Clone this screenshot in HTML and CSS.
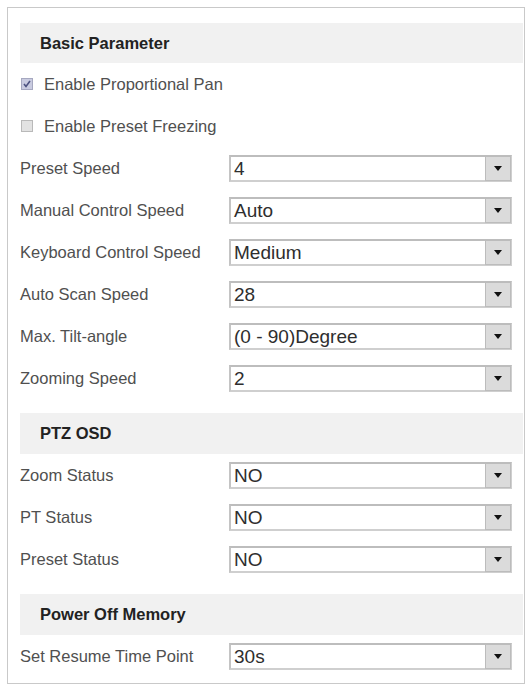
FILE: index.html
```html
<!DOCTYPE html>
<html lang="en">
<head>
    <meta charset="UTF-8">
    <meta name="viewport" content="width=device-width, initial-scale=1.0">
    <title>PTZ Basic Parameter</title>
    <link rel="stylesheet" href="styles.css">
</head>
<body>
    <div class="panel">
        <!-- Basic Parameter -->
        <div class="section-title">Basic Parameter</div>
        <div class="check-row">
            <span class="checkbox checked">
                <svg width="10" height="10" viewBox="0 0 10 10"><path d="M2 5l2 2.5L8 2" fill="none" stroke="#4d5280" stroke-width="1.6"/></svg>
            </span>
            Enable Proportional Pan
        </div>
        <div class="check-row">
            <span class="checkbox"></span>
            Enable Preset Freezing
        </div>
        <div class="field-row">
            <span class="field-label">Preset Speed</span>
            <div class="select"><span class="select-value">4</span><span class="select-btn"><svg width="8" height="5" viewBox="0 0 8 5"><path d="M0 0h8L4 5z" fill="#111"/></svg></span></div>
        </div>
        <div class="field-row">
            <span class="field-label">Manual Control Speed</span>
            <div class="select"><span class="select-value">Auto</span><span class="select-btn"><svg width="8" height="5" viewBox="0 0 8 5"><path d="M0 0h8L4 5z" fill="#111"/></svg></span></div>
        </div>
        <div class="field-row">
            <span class="field-label">Keyboard Control Speed</span>
            <div class="select"><span class="select-value">Medium</span><span class="select-btn"><svg width="8" height="5" viewBox="0 0 8 5"><path d="M0 0h8L4 5z" fill="#111"/></svg></span></div>
        </div>
        <div class="field-row">
            <span class="field-label">Auto Scan Speed</span>
            <div class="select"><span class="select-value">28</span><span class="select-btn"><svg width="8" height="5" viewBox="0 0 8 5"><path d="M0 0h8L4 5z" fill="#111"/></svg></span></div>
        </div>
        <div class="field-row">
            <span class="field-label">Max. Tilt-angle</span>
            <div class="select"><span class="select-value">(0 - 90)Degree</span><span class="select-btn"><svg width="8" height="5" viewBox="0 0 8 5"><path d="M0 0h8L4 5z" fill="#111"/></svg></span></div>
        </div>
        <div class="field-row">
            <span class="field-label">Zooming Speed</span>
            <div class="select"><span class="select-value">2</span><span class="select-btn"><svg width="8" height="5" viewBox="0 0 8 5"><path d="M0 0h8L4 5z" fill="#111"/></svg></span></div>
        </div>

        <!-- PTZ OSD -->
        <div class="section-title spaced">PTZ OSD</div>
        <div class="field-row">
            <span class="field-label">Zoom Status</span>
            <div class="select"><span class="select-value">NO</span><span class="select-btn"><svg width="8" height="5" viewBox="0 0 8 5"><path d="M0 0h8L4 5z" fill="#111"/></svg></span></div>
        </div>
        <div class="field-row">
            <span class="field-label">PT Status</span>
            <div class="select"><span class="select-value">NO</span><span class="select-btn"><svg width="8" height="5" viewBox="0 0 8 5"><path d="M0 0h8L4 5z" fill="#111"/></svg></span></div>
        </div>
        <div class="field-row">
            <span class="field-label">Preset Status</span>
            <div class="select"><span class="select-value">NO</span><span class="select-btn"><svg width="8" height="5" viewBox="0 0 8 5"><path d="M0 0h8L4 5z" fill="#111"/></svg></span></div>
        </div>

        <!-- Power Off Memory -->
        <div class="section-title spaced">Power Off Memory</div>
        <div class="field-row">
            <span class="field-label">Set Resume Time Point</span>
            <div class="select"><span class="select-value">30s</span><span class="select-btn"><svg width="8" height="5" viewBox="0 0 8 5"><path d="M0 0h8L4 5z" fill="#111"/></svg></span></div>
        </div>
    </div>
</body>
</html>
```

FILE: styles.css
```css
* {
    margin: 0;
    padding: 0;
    box-sizing: border-box;
}

body {
    font-family: "Liberation Sans", Arial, sans-serif;
    background-color: #fff;
    color: #505050;
}

/* Outer panel */
.panel {
    margin: 7px 0 0 7px;
    width: 518px;
    height: 677px;
    border: 1px solid #c9c9c9;
    padding: 15px 1px 0 12px;
}

/* Section headers */
.section-title {
    height: 40px;
    background-color: #f1f1f1;
    padding-left: 20px;
    display: flex;
    align-items: center;
    font-size: 16.5px;
    font-weight: bold;
    color: #222;
}

.section-title.spaced {
    margin-top: 14px;
    height: 41px;
}

/* Checkbox rows */
.check-row {
    height: 42px;
    display: flex;
    align-items: center;
    font-size: 16.5px;
    padding-left: 1px;
}

.checkbox {
    width: 12px;
    height: 12px;
    margin-right: 11px;
    border: 1px solid #b9b9b9;
    background-color: #e2e2e2;
    display: flex;
    align-items: center;
    justify-content: center;
}

.checkbox.checked {
    background-color: #c9cbe0;
    border-color: #a6a8c0;
}

/* Label + dropdown rows */
.field-row {
    height: 42px;
    display: flex;
    align-items: center;
}

.field-label {
    width: 209px;
    font-size: 16.5px;
}

.select {
    width: 283px;
    height: 27px;
    display: flex;
    border: 2px solid #cfcfcf;
    border-top-color: #bdbdbd;
    border-left-color: #c4c4c4;
    background-color: #fff;
}

.select-value {
    flex: 1;
    padding-left: 3px;
    font-size: 19px;
    line-height: 23px;
    color: #2e2e2e;
}

.select-btn {
    width: 26px;
    display: flex;
    align-items: center;
    justify-content: center;
    background-color: #dbdbdb;
    border: 1px solid #bcbcbc;
    margin: -1px -1px -1px 0;
}
```
